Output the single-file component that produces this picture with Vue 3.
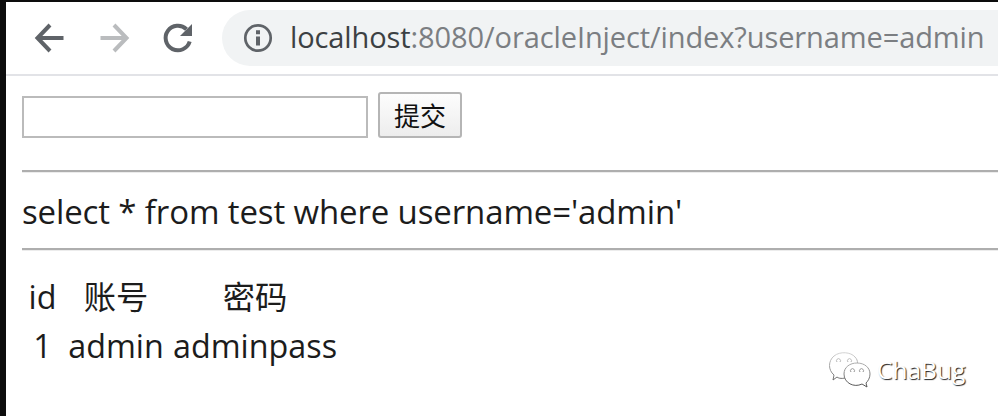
<script setup>
const columns = ['id', '账号', '密码']
const rows = [['1', 'admin', 'adminpass']]
</script>

<template>
  <div class="window">
    <header class="toolbar">
      <svg class="nav back" viewBox="0 0 32 32"><path d="M29.500 16H5M16 3L3.500 16L16 29" /></svg>
      <svg class="nav forward" viewBox="0 0 32 32"><path d="M2.500 16H27M16 3L28.500 16L16 29" /></svg>
      <svg class="nav reload" viewBox="0 0 32 32">
        <path d="M27.700 19.500A12.300 12.300 0 1 1 24.500 7.200" />
        <path class="solid" d="M30 2V14H18Z" />
      </svg>
      <div class="address">
        <svg class="info" viewBox="0 0 30 30">
          <circle cx="15" cy="15" r="12.700" />
          <path d="M15 13.500V22.500M15 7.300V11.300" />
        </svg>
        <span class="url"><span class="host">localhost</span>:8080/oracleInject/index?username=admin</span>
      </div>
    </header>
    <main class="page">
      <form class="query" @submit.prevent>
        <input class="field" type="text" />
        <button class="submit">提交</button>
      </form>
      <hr class="rule" />
      <p class="sql">select * from test where username='admin'</p>
      <hr class="rule" />
      <div class="table">
        <div class="row head"><span v-for="c in columns" :key="c" class="cell">{{ c }}</span></div>
        <div v-for="r in rows" :key="r[0]" class="row"><span v-for="c in r" :key="c" class="cell">{{ c }}</span></div>
      </div>
    </main>
    <div class="watermark">
      <svg class="wechat" viewBox="0 0 42 36">
        <defs>
          <linearGradient id="fade" gradientUnits="userSpaceOnUse" x1="0" y1="0" x2="0" y2="34">
            <stop offset="0" stop-color="#d5d5d5" />
            <stop offset="0.500" stop-color="#999" />
            <stop offset="1" stop-color="#555" />
          </linearGradient>
        </defs>
        <path d="M16 26C12 27 9 26 8 25L4 28L5 23C-1 18-1 9 5 4C11-1 22 0 26 5C28 7 28.500 9 28.500 11" />
        <path d="M37 31L38 35L33 32C25 36 15 31 15 22C15 15 21 11 28 11C36 11 41 16 41 22C41 26 39 29 37 31Z" />
        <path d="M8 10A2 2 0 1 1 11 10M19 10A2 2 0 1 1 22 10M22 20A2 2 0 1 1 25 20M31 20A2 2 0 1 1 34 20" />
      </svg>
      <span class="brand">ChaBug</span>
    </div>
  </div>
</template>

<style>
body { background: #fff; overflow: hidden; }
</style>

<style scoped>
.window {
  position: relative;
  box-sizing: border-box;
  width: 998px;
  height: 416px;
  overflow: hidden;
  border-top: 2px solid #0d0d0d;
  border-left: 6px solid #0d0d0d;
  background: #fff;
  color: #1c1c1c;
  font-family: "Open Sans", "Noto Sans CJK SC", sans-serif;
}
.toolbar {
  box-sizing: border-box;
  display: flex;
  align-items: center;
  height: 74px;
  padding-left: 28px;
  border-bottom: 2px solid #e2e3e7;
}
.nav {
  flex: none;
  width: 32px;
  height: 32px;
  margin-right: 32px;
  fill: none;
  stroke: #5f6368;
  stroke-width: 4;
}
.forward { stroke: #babcbe; }
.reload { margin-right: 28px; }
.solid { fill: #5f6368; stroke: none; }
.address {
  display: flex;
  flex: 1;
  align-items: center;
  height: 56px;
  padding-left: 21px;
  border-radius: 28px 0 0 28px;
  background: #f1f3f4;
}
.info { flex: none; width: 30px; height: 30px; margin-right: 17px; fill: none; stroke: #5f6368; stroke-width: 2.700; }
.info path { stroke-width: 4; }
.url { padding-bottom: 2px; color: #7b7e82; font-size: 29px; line-height: 54px; letter-spacing: -0.100px; white-space: nowrap; }
.host { color: #3c4043; }
.page { padding: 16px 0 0 16px; }
.query { display: flex; align-items: flex-end; gap: 10px; height: 46px; }
.field { box-sizing: border-box; width: 346px; height: 42px; padding: 0; border: 2px solid #bbb; background: #fff; outline: 0; }
.submit {
  box-sizing: border-box;
  width: 84px;
  height: 46px;
  padding: 0;
  border: 2px solid #b5b5b5;
  border-radius: 3px;
  background: linear-gradient(#fdfdfd, #ededed);
  color: #111;
  font: 26px/38px "Noto Sans CJK SC", sans-serif;
}
.rule { height: 2px; margin: 32px 0 0; border: 0; background: #aeaeae; box-shadow: 0 1px #ececec; }
.sql { height: 48px; margin: 0; padding-top: 16px; line-height: 48px; font-size: 33px; letter-spacing: -0.130px; white-space: nowrap; }
.sql + .rule { margin-top: 12px; }
.table { padding-top: 21px; font-size: 32.300px; }
.row { display: grid; grid-template-columns: 41px 102px 172px; gap: 2px; height: 49px; line-height: 50px; }
.cell { text-align: center; white-space: nowrap; }
.watermark {
  position: absolute;
  left: 823px;
  top: 349px;
  display: flex;
  align-items: center;
  gap: 6px;
}
.wechat { width: 42px; height: 36px; fill: none; stroke: url(#fade); stroke-width: 1; overflow: visible; }
.brand { color: #fff; font-size: 24.500px; line-height: 38px; text-shadow: 1px 1px 1px #222; }
</style>
